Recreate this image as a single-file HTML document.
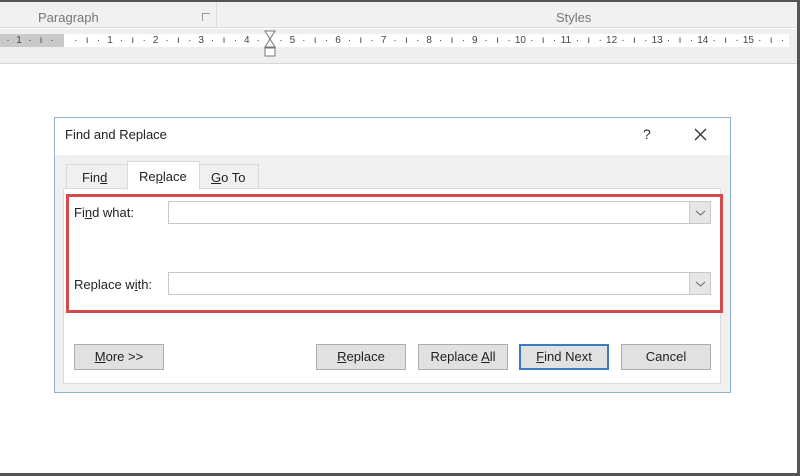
<!DOCTYPE html>
<html><head><style>
*{margin:0;padding:0;box-sizing:border-box}
body{width:800px;height:476px;overflow:hidden;background:#fff;font-family:"Liberation Sans",sans-serif;position:relative}
.a{position:absolute}
.btn{position:absolute;top:344px;height:26px;background:#e1e1e1;border:1px solid #adadad;font-size:13px;color:#222;text-align:center;line-height:24px}
.inp{position:absolute;left:168px;width:543px;height:23px;border:1px solid #c8c8c8;background:#fff}
.dd{position:absolute;right:0;top:0;width:21px;height:21px;background:#e6e6e6;border-left:1px solid #ccc}
.lbl{position:absolute;font-size:13px;color:#222}
.r{position:absolute;top:34px;font-size:10px;color:#444;line-height:13px;width:20px;margin-left:-10px;text-align:center}
</style></head><body>
<div class="a" style="left:0;top:0;width:800px;height:2px;background:#555"></div>
<div class="a" style="left:0;top:2px;width:800px;height:26px;background:#f1f1f1;border-bottom:1px solid #dcdcdc"></div>
<div class="a" style="left:38px;top:10px;font-size:13px;color:#777">Paragraph</div>
<div class="a" style="left:202px;top:13px;width:8px;height:8px;border-left:1px solid #999;border-top:1px solid #999"></div>
<div class="a" style="left:216px;top:2px;width:1px;height:26px;background:#ddd"></div>
<div class="a" style="left:556px;top:10px;font-size:13px;color:#777">Styles</div>
<div class="a" style="left:0;top:29px;width:800px;height:35px;background:#efefef;border-bottom:1px solid #d6d6d6"></div>
<div class="a" style="left:0;top:34px;width:64px;height:13px;background:#c9c9c9"></div>
<div class="a" style="left:64px;top:34px;width:725px;height:13px;background:#fff"></div>
<div id="ruler"></div>
<script>
var h='',p=function(x,t){h+='<div class="r" style="left:'+x+'px">'+t+'</div>';};
p(8,'·');p(19,'1');p(30,'·');p(41,'ı');p(52,'·');
for(var n=0;n<=15;n++){var x=110+45.6*(n-1);
 if(n>0)p(x,String(n));
 if(x+11<265||x+11>275)p(x+11.4,'·');
 p(x+22.8,'ı');
 var y=x+34.2; if(y<265||y>275)p(y,'·');}
document.getElementById('ruler').innerHTML=h;
</script>
<svg class="a" style="left:263px;top:30px" width="14" height="28"><path d="M2 1H12L7 9L12 17H2L7 9Z" fill="#fff" stroke="#777"/><rect x="2" y="18" width="10" height="8" fill="#fff" stroke="#777"/></svg>
<div class="a" style="left:797px;top:0;width:3px;height:476px;background:#555"></div>
<div class="a" style="left:0;top:473px;width:800px;height:3px;background:#555"></div>

<div class="a" style="left:54px;top:117px;width:677px;height:276px;border:1px solid #8db5cc;background:#f0f0f0"></div>
<div class="a" style="left:55px;top:118px;width:675px;height:37px;background:#fff"></div>
<div class="a" style="left:65px;top:127px;font-size:13px;color:#222">Find and Replace</div>
<div class="a" style="left:643px;top:126px;font-size:14px;color:#333">?</div>
<svg class="a" style="left:694px;top:128px" width="13" height="13"><path d="M1 1L12 12M12 1L1 12" stroke="#333" stroke-width="1.3"/></svg>
<div class="a" style="left:66px;top:164px;width:62px;height:25px;border:1px solid #d9d9d9;border-bottom:none;background:#f0f0f0"></div>
<div class="a" style="left:82px;top:170px;font-size:13px;color:#222">Fin<u>d</u></div>
<div class="a" style="left:199px;top:164px;width:60px;height:25px;border:1px solid #d9d9d9;border-bottom:none;background:#f0f0f0"></div>
<div class="a" style="left:211px;top:170px;font-size:13px;color:#222"><u>G</u>o To</div>
<div class="a" style="left:63px;top:188px;width:658px;height:196px;background:#fff;border:1px solid #dcdcdc"></div>
<div class="a" style="left:127px;top:161px;width:73px;height:29px;border:1px solid #d9d9d9;border-bottom:none;background:#fff"></div>
<div class="a" style="left:139px;top:169px;font-size:13px;color:#222">Re<u>p</u>lace</div>
<div class="a" style="left:66px;top:194px;width:657px;height:119px;border:3px solid #d24a4a"></div>
<div class="lbl" style="left:74px;top:205px">Fi<u>n</u>d what:</div>
<div class="inp" style="top:201px"><div class="dd"><svg width="21" height="21"><path d="M6 9L10.5 13L15 9" fill="none" stroke="#666"/></svg></div></div>
<div class="lbl" style="left:74px;top:277px">Replace w<u>i</u>th:</div>
<div class="inp" style="top:272px"><div class="dd"><svg width="21" height="21"><path d="M6 9L10.5 13L15 9" fill="none" stroke="#666"/></svg></div></div>
<div class="btn" style="left:74px;width:90px"><u>M</u>ore &gt;&gt;</div>
<div class="btn" style="left:316px;width:90px"><u>R</u>eplace</div>
<div class="btn" style="left:418px;width:90px">Replace <u>A</u>ll</div>
<div class="btn" style="left:519px;width:90px;border:2px solid #3d7bc4;line-height:22px"><u>F</u>ind Next</div>
<div class="btn" style="left:621px;width:90px">Cancel</div>
</body></html>
